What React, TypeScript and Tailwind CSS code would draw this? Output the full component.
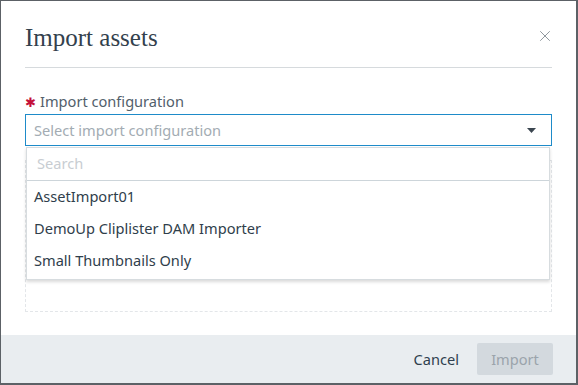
import { X } from "lucide-react";

const configs = ["AssetImport01", "DemoUp Cliplister DAM Importer", "Small Thumbnails Only"];

function ConfigSelect() {
  return (
    <div className="relative">
      <div className="flex h-[32px] items-center justify-between border border-[#1e8bc9] pl-[8px] pr-[15px]">
        <span className="pt-[2px] text-[14.6px] text-[#a3acb3]">Select import configuration</span>
        <svg width="9" height="5" viewBox="0 0 9 5">
          <path d="M0 0 L9 0 L4.5 5 Z" fill="#3b4650" />
        </svg>
      </div>
      {/* open menu */}
      <div className="absolute left-px right-[2px] top-[33px] z-10 border border-[#d7dcdf] bg-white pb-[2px] shadow-[0_2px_3px_rgba(0,0,0,0.15)]">
        <div className="flex h-[33px] items-center border-b border-[#cdd5da] px-[10px]">
          <span className="text-[14.6px] text-[#c8cdd2]">Search</span>
        </div>
        {configs.map((c) => (
          <div key={c} className="flex h-[32px] items-center px-[7px] text-[14.6px] text-[#2f3e4b]">
            {c}
          </div>
        ))}
      </div>
    </div>
  );
}

export default function App() {
  return (
    <div className="h-[385px] w-[578px] bg-[#5c6166] pb-[2px] pl-px pr-[2px] pt-px" style={{ fontFamily: '"Noto Sans", "Open Sans", sans-serif' }}>
      <div className="flex h-full flex-col bg-white">
        {/* header */}
        <div className="px-[24px] pt-[21px]">
          <div className="flex items-start justify-between">
            <h1 className="text-[25px] leading-[32px] text-[#33414d]" style={{ fontFamily: '"Liberation Serif", serif' }}>
              Import assets
            </h1>
            <X size={18} strokeWidth={1} className="mr-[-2px] mt-[5px] text-[#6b757d]" />
          </div>
          <div className="mt-[13px] h-px bg-[#d6dadd]" />
        </div>

        {/* body */}
        <div className="flex-1 px-[24px] pt-[23px]">
          <div className="flex h-[20px] items-center gap-[4px] pt-[2px] text-[14.6px] text-[#52606b]">
            <span className="text-[13px] leading-none text-[#c4103a]">✱</span>
            <span>Import configuration</span>
          </div>
          <div className="mt-[3px]">
            <ConfigSelect />
          </div>
          <div className="mt-[14px] h-[152px] border border-dashed border-[#e3e6e9]" />
        </div>

        {/* footer */}
        <div className="flex h-[48px] items-center justify-end gap-[18px] bg-[#e9edf0] pr-[23px]">
          <span className="pt-[2px] text-[14.6px] text-[#2f3f4e]">Cancel</span>
          <div className="flex h-[32px] w-[76px] items-center justify-center rounded-[2px] bg-[#d3d9de] pt-[2px] text-[14.6px] text-[#9ba4ab]">
            Import
          </div>
        </div>
      </div>
    </div>
  );
}
